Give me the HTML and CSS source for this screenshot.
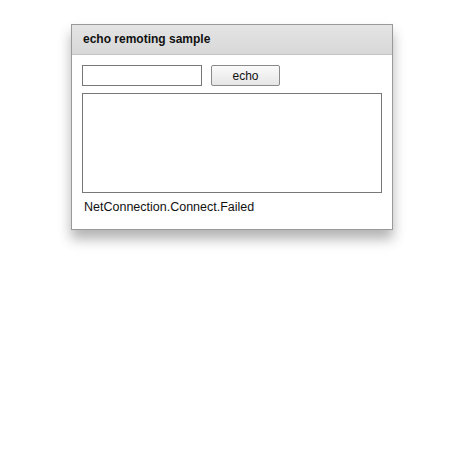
FILE: index.html
```html
<!DOCTYPE html>
<html lang="en">
<head>
    <meta charset="UTF-8">
    <title>echo remoting sample</title>
    <link rel="stylesheet" href="styles.css">
</head>
<body>
    <div class="panel">
        <div class="panel-title">echo remoting sample</div>
        <div class="panel-body">
            <div class="row">
                <input type="text" class="msg">
                <button class="echo-btn">echo</button>
            </div>
            <textarea class="output"></textarea>
            <div class="status">NetConnection.Connect.Failed</div>
        </div>
    </div>
</body>
</html>
```

FILE: styles.css
```css
html, body {
    min-height: 100%;
}
body {
    margin: 0;
    padding: 24px 0 60px 71px;
    font-family: "Liberation Sans", Arial, sans-serif;
    background: #fff;
}
.panel {
    width: 320px;
    border: 1px solid #999;
    background: #fff;
    box-shadow: 0 9px 12px rgba(0, 0, 0, 0.3);
}
.panel-title {
    height: 29px;
    line-height: 29px;
    padding-left: 11px;
    font-size: 12px;
    font-weight: bold;
    color: #111;
    background: linear-gradient(#e4e4e4, #d8d8d8);
    border-bottom: 1px solid #c4c4c4;
}
.panel-body {
    padding: 10px 10px 0 10px;
    height: 164px;
}
.row {
    display: flex;
    align-items: center;
    height: 21px;
}
.msg {
    box-sizing: border-box;
    width: 120px;
    height: 21px;
    margin: 0;
    border: 1px solid #777;
    padding: 2px;
}
.echo-btn {
    box-sizing: border-box;
    width: 69px;
    height: 21px;
    margin-left: 9px;
    padding: 0;
    border: 1px solid #8a8a8a;
    border-radius: 2px;
    background: linear-gradient(#fafafa, #e6e6e6);
    font-family: "Liberation Sans", Arial, sans-serif;
    font-size: 12px;
    color: #111;
}
.output {
    display: block;
    box-sizing: border-box;
    width: 300px;
    height: 100px;
    margin: 7px 0 0 0;
    border: 1px solid #777;
    resize: none;
}
.status {
    margin-top: 7px;
    padding-left: 2px;
    font-size: 12.5px;
    color: #111;
}
```
